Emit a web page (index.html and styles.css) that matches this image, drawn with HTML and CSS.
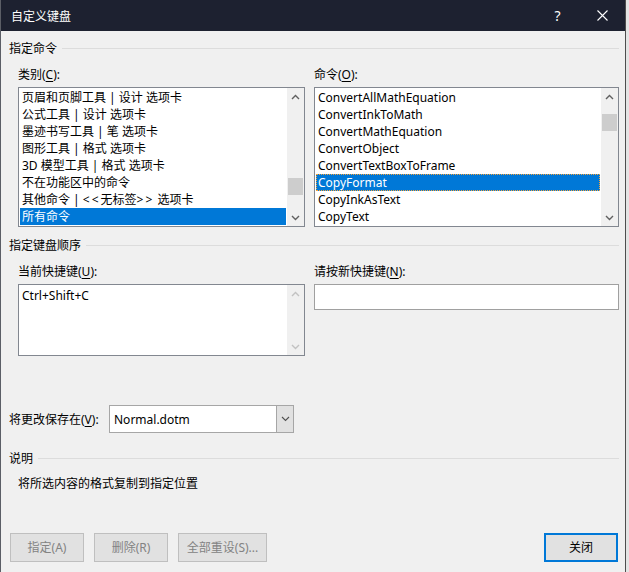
FILE: index.html
```html
<!DOCTYPE html>
<html lang="zh-CN">
<head>
<meta charset="utf-8">
<title>自定义键盘</title>
<link rel="stylesheet" href="styles.css">
</head>
<body>
<div class="dialog">
  <div class="titlebar">
    <span class="title">自定义键盘</span>
    <span class="tb-btn help">?</span>
    <span class="tb-btn close"><svg width="11" height="11" viewBox="0 0 11 11"><path d="M0.5 0.5L10.5 10.5M10.5 0.5L0.5 10.5" stroke="#fff" stroke-width="1.1" fill="none"/></svg></span>
  </div>
  <div class="content">
    <div class="section"><span>指定命令</span><i class="rule"></i></div>
    <div class="pair">
      <div class="col">
        <div class="label">类别(<u>C</u>):</div>
        <div class="listbox">
          <ul class="items">
            <li>页眉和页脚工具 | 设计 选项卡</li>
            <li>公式工具 | 设计 选项卡</li>
            <li>墨迹书写工具 | 笔 选项卡</li>
            <li>图形工具 | 格式 选项卡</li>
            <li>3D 模型工具 | 格式 选项卡</li>
            <li>不在功能区中的命令</li>
            <li>其他命令 | <span class="angle">&lt;&lt;</span>无标签<span class="angle">&gt;&gt;</span> 选项卡</li>
            <li class="sel">所有命令</li>
          </ul>
          <div class="sbar">
            <span class="arrow"><svg width="9" height="6" viewBox="0 0 9 6"><path d="M1 5L4.5 1.5L8 5" stroke="#606060" stroke-width="1.4" fill="none"/></svg></span>
            <span class="track"><span class="thumb" style="margin-top:73px"></span></span>
            <span class="arrow"><svg width="9" height="6" viewBox="0 0 9 6"><path d="M1 1L4.5 4.5L8 1" stroke="#606060" stroke-width="1.4" fill="none"/></svg></span>
          </div>
        </div>
      </div>
      <div class="col">
        <div class="label">命令(<u>O</u>):</div>
        <div class="listbox">
          <ul class="items">
            <li>ConvertAllMathEquation</li>
            <li>ConvertInkToMath</li>
            <li>ConvertMathEquation</li>
            <li>ConvertObject</li>
            <li>ConvertTextBoxToFrame</li>
            <li class="sel focus">CopyFormat</li>
            <li>CopyInkAsText</li>
            <li>CopyText</li>
          </ul>
          <div class="sbar">
            <span class="arrow"><svg width="9" height="6" viewBox="0 0 9 6"><path d="M1 5L4.5 1.5L8 5" stroke="#606060" stroke-width="1.4" fill="none"/></svg></span>
            <span class="track"><span class="thumb" style="margin-top:9px"></span></span>
            <span class="arrow"><svg width="9" height="6" viewBox="0 0 9 6"><path d="M1 1L4.5 4.5L8 1" stroke="#606060" stroke-width="1.4" fill="none"/></svg></span>
          </div>
        </div>
      </div>
    </div>

    <div class="section s2"><span>指定键盘顺序</span><i class="rule"></i></div>
    <div class="pair keys">
      <div class="col">
        <div class="label">当前快捷键(<u>U</u>):</div>
        <div class="keybox">
          <div class="keytext">Ctrl+Shift+C</div>
          <div class="sbar disabled">
            <span class="arrow"><svg width="9" height="6" viewBox="0 0 9 6"><path d="M1 5L4.5 1.5L8 5" stroke="#c2c2c2" stroke-width="1.4" fill="none"/></svg></span>
            <span class="track"></span>
            <span class="arrow"><svg width="9" height="6" viewBox="0 0 9 6"><path d="M1 1L4.5 4.5L8 1" stroke="#c2c2c2" stroke-width="1.4" fill="none"/></svg></span>
          </div>
        </div>
      </div>
      <div class="col">
        <div class="label">请按新快捷键(<u>N</u>):</div>
        <div class="newkey"></div>
      </div>
    </div>

    <div class="saverow">
      <span class="savelabel">将更改保存在(<u>V</u>):</span>
      <div class="combo">
        <span class="combotext">Normal.dotm</span>
        <span class="dropbtn"><svg width="9" height="6" viewBox="0 0 9 6"><path d="M1 1L4.5 4.5L8 1" stroke="#505050" stroke-width="1.1" fill="none"/></svg></span>
      </div>
    </div>

    <div class="section s3"><span>说明</span><i class="rule"></i></div>
    <div class="desc">将所选内容的格式复制到指定位置</div>

    <div class="buttons">
      <span class="btn disabled">指定(A)</span>
      <span class="btn disabled">删除(R)</span>
      <span class="btn disabled wide">全部重设(S)...</span>
      <span class="btn default">关闭</span>
    </div>
  </div>
</div>
</body>
</html>
```

FILE: styles.css
```css
* { box-sizing: border-box; margin: 0; padding: 0; }
html, body { width: 629px; height: 572px; overflow: hidden; }
body {
  background: #e4e4e4;
  font-family: "Noto Sans", "Noto Sans CJK SC", sans-serif;
  font-size: 12px;
  line-height: 17px;
  color: #000;
}
u { text-decoration: underline; text-underline-offset: 2px; }

.dialog {
  width: 626px;
  height: 572px;
  border-left: 1px solid #5b5e66;
  border-right: 1px solid #4e4e4e;
  background: #f0f0f0;
  display: flex;
  flex-direction: column;
}

.titlebar {
  height: 31px;
  flex: none;
  background: #1d2130;
  color: #fff;
  display: flex;
  align-items: center;
  padding-left: 10px;
}
.title { flex: 1; font-family: "Noto Sans CJK SC", sans-serif; font-size: 12px; }
.tb-btn {
  width: 45px;
  height: 31px;
  display: flex;
  align-items: center;
  justify-content: center;
}
.help { font-family: "Noto Sans", sans-serif; font-size: 14px; }

.content {
  flex: 1;
  display: flex;
  flex-direction: column;
  padding: 9px 6px 10px 8px;
}

.section {
  display: flex;
  align-items: center;
  height: 17px;
}
.rule { flex: 1; height: 1px; background: #dcdcdc; margin-left: 5px; }
.s2 { margin-top: 10px; }
.s3 { margin-top: 17px; }

.pair {
  display: grid;
  grid-template-columns: 287px 305px;
  column-gap: 9px;
  margin: 9px 0 0 9px;
}
.label { height: 17px; }

.listbox {
  margin-top: 4px;
  height: 140px;
  border: 1px solid #828790;
  background: #fff;
  display: flex;
}
.items {
  list-style: none;
  flex: 1;
  padding: 1px;
  overflow: hidden;
}
.items li {
  height: 17px;
  padding-left: 2px;
  white-space: nowrap;
}
.angle { letter-spacing: 2px; }
.items li.sel { background: #0078d7; color: #fff; }
.items li.focus { outline: 1px dotted #f7a33a; outline-offset: -1px; }

.sbar {
  width: 17px;
  flex: none;
  background: #f0f0f0;
  display: flex;
  flex-direction: column;
}
.arrow {
  height: 17px;
  flex: none;
  display: flex;
  align-items: center;
  justify-content: center;
}
.track { flex: 1; display: flex; flex-direction: column; }
.thumb { height: 17px; margin-left: 1px; margin-right: 1px; background: #cdcdcd; }

.keybox {
  margin-top: 4px;
  height: 72px;
  border: 1px solid #828790;
  background: #fff;
  display: flex;
}
.keytext { flex: 1; padding: 2px 3px; }
.newkey {
  margin-top: 4px;
  height: 26px;
  border: 1px solid #a0a0a0;
  background: #fff;
}

.saverow {
  display: flex;
  align-items: center;
  margin-top: 49px;
  height: 28px;
}
.savelabel { width: 100px; flex: none; }
.combo {
  width: 185px;
  height: 28px;
  border: 1px solid #a6a6a6;
  background: #fff;
  display: flex;
  align-items: center;
}
.combotext { flex: 1; padding-left: 4px; }
.dropbtn {
  width: 17px;
  height: 26px;
  background: #e1e1e1;
  border-left: 1px solid #a6a6a6;
  display: flex;
  align-items: center;
  justify-content: center;
}

.desc { margin: 8px 0 0 9px; }

.buttons {
  margin-top: auto;
  display: flex;
  gap: 10px;
  padding-left: 1px;
  padding-right: 1px;
}
.btn {
  width: 74px;
  height: 29px;
  display: flex;
  align-items: center;
  justify-content: center;
  background: #e1e1e1;
  border: 1px solid #adadad;
}
.btn.wide { width: 89px; }
.btn.disabled { color: #838383; border-color: #bfbfbf; }
.btn.default { margin-left: auto; border: 2px solid #0078d7; }
```
